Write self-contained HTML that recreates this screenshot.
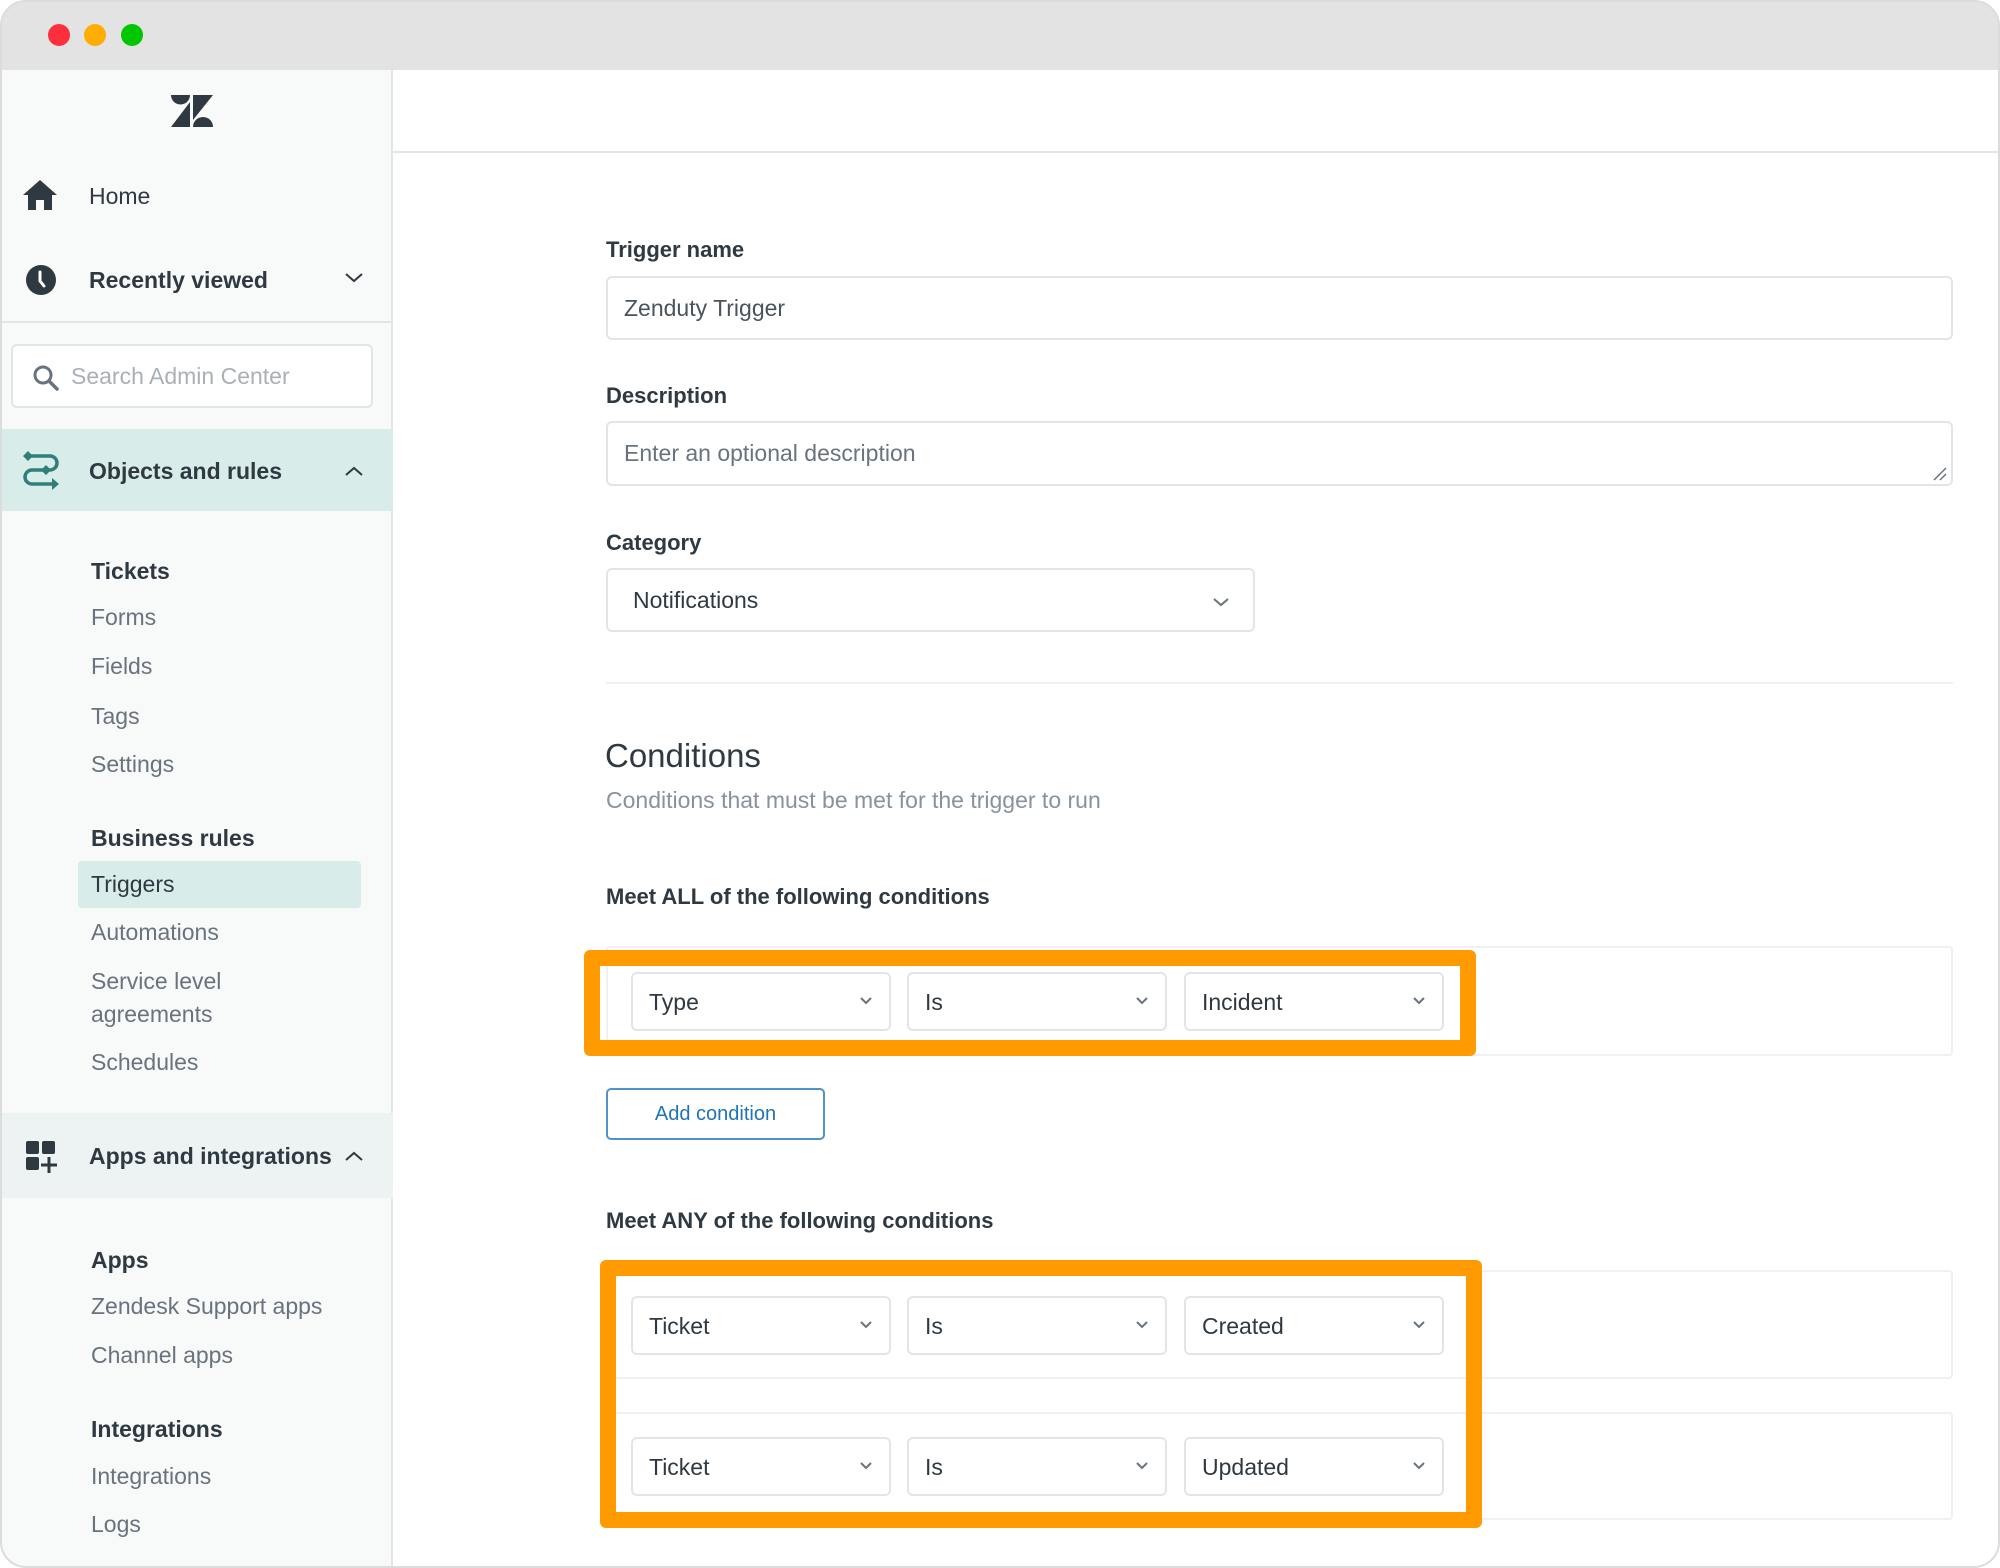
<!DOCTYPE html>
<html><head><meta charset="utf-8"><style>
*{box-sizing:border-box;margin:0;padding:0}
body{width:2000px;height:1568px;background:#fff;font-family:"Liberation Sans",sans-serif;color:#2f3941;position:relative;overflow:hidden}
.a{position:absolute}
.t{position:absolute;height:30px;line-height:30px;white-space:nowrap;font-size:23px}
.win{left:0;top:0;width:2000px;height:1568px;border-radius:26px;overflow:hidden;background:#fff}
.frame{left:0;top:0;width:2000px;height:1568px;border:2px solid #dcdcdc;border-radius:26px;pointer-events:none}
.bar{left:0;top:0;width:2000px;height:70px;background:#e3e3e3}
.side{left:0;top:70px;width:393px;height:1500px;background:#f8f9f9;border-right:2px solid #e3e6e8}
.g{color:#68737d}
.b{font-weight:bold;color:#2f3941}
.inp{position:absolute;border:2px solid #e2e5e8;border-radius:6px;background:#fff}
.sel{position:absolute;border:2px solid #e2e5e8;border-radius:6px;background:#fff;height:59px;width:260px}
.sel span{position:absolute;left:16px;top:13px;font-size:23px;line-height:30px}
.sel svg{position:absolute;right:16px;top:22px}
.row{position:absolute;left:606px;width:1347px;border:2px solid #eef0f1;border-radius:4px;background:#fff}
.or{position:absolute;border:16px solid #ff9b00;border-radius:6px}
</style></head><body>
<div class="a win">
<div class="a bar"></div>
<div class="a" style="left:48px;top:24px;width:22px;height:22px;border-radius:50%;background:#fe2f3d"></div>
<div class="a" style="left:84px;top:24px;width:22px;height:22px;border-radius:50%;background:#ffad00"></div>
<div class="a" style="left:121px;top:24px;width:22px;height:22px;border-radius:50%;background:#00c600"></div>
<div class="a side"></div>
<!-- logo -->
<svg class="a" style="left:171px;top:95px" width="42" height="32" viewBox="0 0 42 32"><path d="M0 0 H19 A9.5 9.5 0 0 1 0 0Z" fill="#2f3941"/><path d="M19 7 V32 H0Z" fill="#2f3941"/><path d="M22 0 H42 L22 25Z" fill="#2f3941"/><path d="M22 32 A10 10 0 0 1 42 32Z" fill="#2f3941"/></svg>
<!-- home -->
<svg class="a" style="left:22px;top:179px" width="36" height="32" viewBox="0 0 36 32"><path d="M18 1 L35 16 H30 V31 H22 V21 H14 V31 H6 V16 H1Z" fill="#2f3941"/></svg>
<div class="t" style="left:89px;top:181px;color:#2f3941">Home</div>
<svg class="a" style="left:26px;top:265px" width="30" height="30" viewBox="0 0 30 30"><circle cx="15" cy="15" r="15" fill="#2f3941"/><path d="M14 7 V16 L18 21" stroke="#fff" stroke-width="3" fill="none" stroke-linecap="round"/></svg>
<div class="t" style="left:89px;top:265px;font-weight:bold">Recently viewed</div>
<svg class="a" style="left:344px;top:272px" width="20" height="12" viewBox="0 0 20 12"><path d="M2 2 L10 9 L18 2" stroke="#2f3941" stroke-width="2" fill="none"/></svg>
<div class="a" style="left:0;top:321px;width:393px;height:2px;background:#e3e6e8"></div>
<div class="inp" style="left:11px;top:344px;width:362px;height:64px"></div>
<svg class="a" style="left:32px;top:364px" width="28" height="28" viewBox="0 0 28 28"><circle cx="11" cy="11" r="8" stroke="#68737d" stroke-width="3" fill="none"/><path d="M17 17 L25 25" stroke="#68737d" stroke-width="3.5" stroke-linecap="round"/></svg>
<div class="t" style="left:71px;top:361px;color:#a9b0b6">Search Admin Center</div>
<div class="a" style="left:0;top:429px;width:393px;height:82px;background:#d8ecea"></div>
<svg class="a" style="left:22px;top:450px" width="38" height="40" viewBox="0 0 38 40"><g stroke="#2f7e79" stroke-width="3.5" fill="none"><path d="M6 6 H28 A7 7 0 0 1 28 20 H10 A7 7 0 0 0 10 34 H32"/></g><path d="M1 6 L6 1 L11 6 L6 11Z M19 20 L24 15 L29 20 L24 25Z" fill="#2f7e79"/><path d="M30 28 L37 34 L30 40Z" fill="#2f7e79"/></svg>
<div class="t" style="left:89px;top:456px;font-weight:bold">Objects and rules</div>
<svg class="a" style="left:344px;top:465px" width="20" height="12" viewBox="0 0 20 12"><path d="M2 10 L10 3 L18 10" stroke="#2f3941" stroke-width="2" fill="none"/></svg>
<div class="t b" style="left:91px;top:556px">Tickets</div>
<div class="t g" style="left:91px;top:602px">Forms</div>
<div class="t g" style="left:91px;top:651px">Fields</div>
<div class="t g" style="left:91px;top:701px">Tags</div>
<div class="t g" style="left:91px;top:749px">Settings</div>
<div class="t b" style="left:91px;top:823px">Business rules</div>
<div class="a" style="left:78px;top:861px;width:283px;height:47px;background:#d8ecea;border-radius:4px"></div>
<div class="t" style="left:91px;top:869px">Triggers</div>
<div class="t g" style="left:91px;top:917px">Automations</div>
<div class="t g" style="left:91px;top:966px">Service level</div>
<div class="t g" style="left:91px;top:999px">agreements</div>
<div class="t g" style="left:91px;top:1047px">Schedules</div>
<div class="a" style="left:0;top:1113px;width:393px;height:85px;background:#edf3f3"></div>
<svg class="a" style="left:25px;top:1140px" width="34" height="34" viewBox="0 0 34 34"><rect x="1" y="1" width="13" height="13" rx="2" fill="#2f3941"/><rect x="17" y="1" width="13" height="13" rx="2" fill="#2f3941"/><rect x="1" y="17" width="13" height="13" rx="2" fill="#2f3941"/><path d="M24 17 V33 M16 25 H32" stroke="#2f3941" stroke-width="3"/></svg>
<div class="t" style="left:89px;top:1141px;font-weight:bold">Apps and integrations</div>
<svg class="a" style="left:344px;top:1150px" width="20" height="12" viewBox="0 0 20 12"><path d="M2 10 L10 3 L18 10" stroke="#2f3941" stroke-width="2" fill="none"/></svg>
<div class="t b" style="left:91px;top:1245px">Apps</div>
<div class="t g" style="left:91px;top:1291px">Zendesk Support apps</div>
<div class="t g" style="left:91px;top:1340px">Channel apps</div>
<div class="t b" style="left:91px;top:1414px">Integrations</div>
<div class="t g" style="left:91px;top:1461px">Integrations</div>
<div class="t g" style="left:91px;top:1509px">Logs</div>

<!-- main -->
<div class="a" style="left:393px;top:151px;width:1607px;height:2px;background:#e3e6e8"></div>
<div class="t b" style="left:606px;top:235px;font-size:22px">Trigger name</div>
<div class="inp" style="left:606px;top:276px;width:1347px;height:64px"></div>
<div class="t" style="left:624px;top:293px;color:#49545c">Zenduty Trigger</div>
<div class="t b" style="left:606px;top:381px;font-size:22px">Description</div>
<div class="inp" style="left:606px;top:421px;width:1347px;height:65px"></div>
<div class="t" style="left:624px;top:438px;color:#68737d">Enter an optional description</div>
<svg class="a" style="left:1932px;top:466px" width="16" height="16" viewBox="0 0 16 16"><path d="M2 14 L14 2 M8 14 L14 8" stroke="#68737d" stroke-width="1.5"/></svg>
<div class="t b" style="left:606px;top:528px;font-size:22px">Category</div>
<div class="inp" style="left:606px;top:568px;width:649px;height:64px"></div>
<div class="t" style="left:633px;top:585px">Notifications</div>
<svg class="a" style="left:1212px;top:596px" width="18" height="12" viewBox="0 0 18 12"><path d="M2 3 L9 9 L16 3" stroke="#68737d" stroke-width="2" fill="none"/></svg>
<div class="a" style="left:606px;top:682px;width:1347px;height:2px;background:#eef0f1"></div>
<div class="t" style="left:605px;top:738px;font-size:33px;height:36px;line-height:36px">Conditions</div>
<div class="t" style="left:606px;top:785px;color:#87929d">Conditions that must be met for the trigger to run</div>
<div class="t b" style="left:606px;top:882px;font-size:22px">Meet ALL of the following conditions</div>

<div class="row" style="top:946px;height:110px"></div>
<div class="or" style="left:584px;top:950px;width:892px;height:106px"></div>
<div class="sel" style="left:631px;top:972px"><span>Type</span><svg width="14" height="10" viewBox="0 0 14 10"><path d="M2 2 L7 7 L12 2" stroke="#68737d" stroke-width="2" fill="none"/></svg></div>
<div class="sel" style="left:907px;top:972px"><span>Is</span><svg width="14" height="10" viewBox="0 0 14 10"><path d="M2 2 L7 7 L12 2" stroke="#68737d" stroke-width="2" fill="none"/></svg></div>
<div class="sel" style="left:1184px;top:972px"><span>Incident</span><svg width="14" height="10" viewBox="0 0 14 10"><path d="M2 2 L7 7 L12 2" stroke="#68737d" stroke-width="2" fill="none"/></svg></div>

<div class="a" style="left:606px;top:1088px;width:219px;height:52px;border:2px solid #5293c7;border-radius:5px;color:#1f73b7;font-size:20px;line-height:48px;text-align:center">Add condition</div>

<div class="t b" style="left:606px;top:1206px;font-size:22px">Meet ANY of the following conditions</div>
<div class="row" style="top:1270px;height:109px"></div>
<div class="row" style="top:1412px;height:108px"></div>
<div class="or" style="left:600px;top:1260px;width:882px;height:268px"></div>
<div class="sel" style="left:631px;top:1296px"><span>Ticket</span><svg width="14" height="10" viewBox="0 0 14 10"><path d="M2 2 L7 7 L12 2" stroke="#68737d" stroke-width="2" fill="none"/></svg></div>
<div class="sel" style="left:907px;top:1296px"><span>Is</span><svg width="14" height="10" viewBox="0 0 14 10"><path d="M2 2 L7 7 L12 2" stroke="#68737d" stroke-width="2" fill="none"/></svg></div>
<div class="sel" style="left:1184px;top:1296px"><span>Created</span><svg width="14" height="10" viewBox="0 0 14 10"><path d="M2 2 L7 7 L12 2" stroke="#68737d" stroke-width="2" fill="none"/></svg></div>
<div class="sel" style="left:631px;top:1437px"><span>Ticket</span><svg width="14" height="10" viewBox="0 0 14 10"><path d="M2 2 L7 7 L12 2" stroke="#68737d" stroke-width="2" fill="none"/></svg></div>
<div class="sel" style="left:907px;top:1437px"><span>Is</span><svg width="14" height="10" viewBox="0 0 14 10"><path d="M2 2 L7 7 L12 2" stroke="#68737d" stroke-width="2" fill="none"/></svg></div>
<div class="sel" style="left:1184px;top:1437px"><span>Updated</span><svg width="14" height="10" viewBox="0 0 14 10"><path d="M2 2 L7 7 L12 2" stroke="#68737d" stroke-width="2" fill="none"/></svg></div>
</div>
<div class="a frame"></div>
</body></html>
